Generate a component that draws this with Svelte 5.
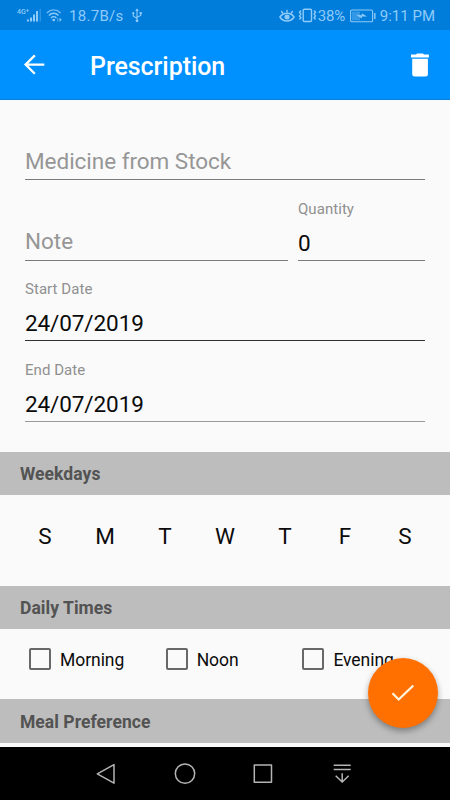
<script lang="ts">
  let medicine = $state('');
  let note = $state('');
  let quantity = $state(0);
  let startDate = $state('24/07/2019');
  let endDate = $state('24/07/2019');

  let weekdays = $state([
    { label: 'S', on: false },
    { label: 'M', on: false },
    { label: 'T', on: false },
    { label: 'W', on: false },
    { label: 'T', on: false },
    { label: 'F', on: false },
    { label: 'S', on: false }
  ]);

  let times = $state([
    { label: 'Morning', on: false },
    { label: 'Noon', on: false },
    { label: 'Evening', on: false }
  ]);
</script>

<div class="screen">
  <div class="status-bar">
    <div class="status-left">
      <span class="net">4G<b>+</b></span>
      <svg class="signal" width="16" height="15" viewBox="0 0 16 15" fill="currentColor"><rect x="0" y="11.5" width="2" height="2"/><rect x="3" y="9.5" width="2" height="4"/><rect x="6" y="6.5" width="2" height="7"/><rect x="9" y="3" width="2" height="10.5"/><rect x="12.6" y="1" width="1.3" height="12.5" opacity=".35"/></svg>
      <svg class="wifi" width="17" height="15" viewBox="0 0 17 15" fill="none" stroke="currentColor" stroke-width="1.4"><path d="M0.8 4.9C4.8 0.9 10.6 0.9 14.6 4.9" opacity=".8"/><path d="M2.9 7.4c2.8-2.8 6.8-2.8 9.6 0"/><path d="M5 9.9c1.5-1.5 3.9-1.5 5.4 0"/><circle cx="7.7" cy="12" r="1.3" fill="currentColor" stroke="none"/><path d="M11.7 10v3.5" stroke-width="1" opacity=".6"/><path d="M13.5 9.8l2.3 2-2.3 2z" fill="currentColor" stroke="none"/></svg>
      <span class="speed">18.7B/s</span>
      <svg width="10" height="15" viewBox="0 0 10 15" fill="none" stroke="currentColor" stroke-width="1.1"><path d="M5 2.5V12M1.3 5.5v2.7L5 10.2M8.7 5v2.5L5 9.3"/><path d="M5 .3L6.8 3H3.2z" fill="currentColor" stroke="none"/><circle cx="5" cy="12.8" r="1.4" fill="currentColor" stroke="none"/><circle cx="1.3" cy="5.2" r="1.1" fill="currentColor" stroke="none"/><path d="M7.6 4h2.2v2.2H7.6z" fill="currentColor" stroke="none"/></svg>
    </div>
    <div class="status-right">
      <svg width="16" height="14" viewBox="0 0 16 14" fill="none" stroke="currentColor" stroke-width="1.4"><path d="M.9 8C4.3 2.9 11.7 2.9 15.1 8C11.7 13.3 4.3 13.3 .9 8Z"/><circle cx="8" cy="8" r="1.9" fill="currentColor"/><path d="M8 3.5V.8M4 4.5L2.3 2M12 4.5L13.7 2"/></svg>
      <svg class="vibrate" width="19" height="15" viewBox="0 0 19 15" fill="none" stroke="currentColor" stroke-width="1.4"><rect x="5.2" y="1.2" width="8.3" height="12.3" rx="1"/><path d="M2.9 2.5L1.5 4.3l1.400 1.800-1.400 1.800 1.400 1.800-1.400 1.800M16.100 2.500l1.400 1.800-1.400 1.800 1.400 1.800-1.400 1.800 1.400 1.800"/></svg>
      <span class="percent">38%</span>
      <svg class="battery" width="26" height="14" viewBox="0 0 26 14" fill="none"><rect x=".6" y="1" width="22" height="11.8" rx="1.3" stroke="currentColor" stroke-width="1.1"/><rect x="2" y="2.5" width="8" height="8.8" fill="currentColor" opacity=".35"/><path d="M6 5.8l5.800.5V4.300l5.200 3.200-5.200-.1V9.500z" fill="currentColor"/><path d="M24.8 4v6" stroke="currentColor" stroke-width="1.4"/></svg>
      <span class="clock">9:11 PM</span>
    </div>
  </div>

  <header class="app-bar">
    <button class="icon-btn" aria-label="Back">
      <svg width="22" height="22" viewBox="0 0 22 22" fill="none" stroke="currentColor" stroke-width="2.3"><path d="M21.300 10.600H2.800M11.800 1.400L2.600 10.600l9.200 9.200"/></svg>
    </button>
    <h1>Prescription</h1>
    <button class="icon-btn" aria-label="Delete">
      <svg width="20" height="24" viewBox="0 0 20 24" fill="currentColor"><path d="M6 1.500L7 .6h6l1 .9h4.900V4.600H1V1.500zM2.200 5.800h15.700v15.300a2.500 2.500 0 0 1-2.500 2.500H4.700a2.500 2.500 0 0 1-2.500-2.500z"/></svg>
    </button>
  </header>

  <main>
    <div class="form">
      <div class="field">
        <div class="value" class:hint={!medicine}>{medicine || 'Medicine from Stock'}</div>
      </div>
      <div class="row">
        <div class="field note">
          <div class="value" class:hint={!note}>{note || 'Note'}</div>
        </div>
        <div class="field quantity">
          <span class="label">Quantity</span>
          <div class="value">{quantity}</div>
        </div>
      </div>
      <div class="field start">
        <span class="label">Start Date</span>
        <div class="value">{startDate}</div>
      </div>
      <div class="field end">
        <span class="label">End Date</span>
        <div class="value">{endDate}</div>
      </div>
    </div>

    <h2>Weekdays</h2>
    <div class="weekdays">
      {#each weekdays as day}
        <button class="day" class:on={day.on} onclick={() => day.on = !day.on}>{day.label}</button>
      {/each}
    </div>

    <h2>Daily Times</h2>
    <div class="times">
      {#each times as time}
        <button class="check" role="checkbox" aria-checked={time.on} onclick={() => time.on = !time.on}>
          <span class="box" class:on={time.on}></span>
          <span class="check-label">{time.label}</span>
        </button>
      {/each}
    </div>

    <h2 class="meal">Meal Preference</h2>
  </main>

  <button class="fab" aria-label="Save">
    <svg width="24" height="18" viewBox="0 0 24 18" fill="none" stroke="currentColor" stroke-width="2.3"><path d="M1.500 9.300l6.200 6.200L22.300 1.500"/></svg>
  </button>

  <nav>
    <svg width="22" height="24" viewBox="0 0 22 24" fill="none" stroke="currentColor" stroke-width="1.5" stroke-linejoin="round"><path d="M19 2.600v18.600L2.300 11.900z"/></svg>
    <svg width="22" height="24" viewBox="0 0 22 24" fill="none" stroke="currentColor" stroke-width="1.5"><circle cx="11" cy="11.600" r="9.700"/></svg>
    <svg width="22" height="24" viewBox="0 0 22 24" fill="none" stroke="currentColor" stroke-width="1.5" stroke-linejoin="round"><rect x="2.300" y="3" width="17.200" height="17.200"/></svg>
    <svg width="22" height="24" viewBox="0 0 22 24" fill="none" stroke="currentColor" stroke-width="1.5"><path d="M2.700 3.300h17M2.700 7.600h17M11.200 11.300v8.200M4.700 13.800l6.500 6.200 6.500-6.200"/></svg>
  </nav>
</div>

<style>
  :global(body) {
    background: #fafafa;
  }

  .screen {
    position: relative;
    width: 450px;
    height: 800px;
    display: flex;
    flex-direction: column;
    overflow: hidden;
    background: #fafafa;
    color: #0b0b0b;
    font-family: Roboto, sans-serif;
  }

  button {
    margin: 0;
    padding: 0;
    border: none;
    background: none;
    color: inherit;
    font-family: inherit;
    cursor: pointer;
  }

  svg {
    display: block;
    flex-shrink: 0;
  }

  .status-bar {
    height: 30px;
    flex-shrink: 0;
    display: flex;
    align-items: center;
    justify-content: space-between;
    padding: 1px 15px 0 17px;
    box-sizing: border-box;
    background: #007cdb;
    color: #8fcbf8;
    font-size: 15px;
    white-space: nowrap;
  }
  .status-left, .status-right {
    display: flex;
    align-items: center;
  }
  .net {
    width: 10px;
    display: flex;
    font-size: 7px;
    font-weight: 500;
    line-height: 8px;
    margin-top: -8px;
  }
  .net b {
    margin-top: -2px;
    font-size: 6px;
  }
  .wifi { margin-left: 3px; }
  .speed {
    width: 52px;
    margin: 0 11px 0 6px;
    letter-spacing: 0.3px;
  }
  .vibrate { margin-left: 3px; }
  .percent {
    width: 30px;
    margin-left: 1px;
    letter-spacing: -0.2px;
  }
  .battery { margin-left: 2px; }
  .clock { margin-left: 4px; }

  .app-bar {
    height: 70px;
    flex-shrink: 0;
    display: flex;
    align-items: center;
    padding: 0 20px 0 23px;
    box-sizing: border-box;
    background: #0091ff;
    color: #fff;
    box-shadow: inset 0 -1px 0 #0880dc;
  }
  h1 {
    flex: 1;
    margin: 3px 0 0 45px;
    font-size: 25px;
    font-weight: 500;
    line-height: 30px;
    letter-spacing: -0.06px;
  }

  main {
    height: 647px;
    flex-shrink: 0;
    overflow: hidden;
  }

  .form {
    height: 352px;
    padding: 46px 25px 0;
    box-sizing: border-box;
  }
  .field {
    display: flex;
    flex-direction: column;
    border-bottom: 1px solid #7b7b7b;
  }
  .value {
    height: 33px;
    font-size: 22.5px;
    line-height: 30px;
    letter-spacing: -0.03px;
  }
  .hint { color: #969696; }
  .label {
    height: 17px;
    margin-bottom: 11px;
    font-size: 15px;
    line-height: 17px;
    letter-spacing: 0.05px;
    color: #909090;
  }
  .row {
    display: flex;
    align-items: flex-end;
    gap: 10px;
    margin-top: 21px;
  }
  .note { width: 263px; }
  .note .value { height: 34px; }
  .quantity { flex: 1; }
  .quantity .value { height: 31px; line-height: 28px; }
  .start {
    margin-top: 20px;
    border-color: #303030;
  }
  .end {
    margin-top: 21px;
    border-color: #999;
  }
  .start .value, .end .value {
    height: 31px;
    line-height: 28px;
    letter-spacing: -0.1px;
  }

  h2 {
    height: 43px;
    margin: 0;
    padding: 1px 20px 0;
    box-sizing: border-box;
    background: #bdbdbd;
    color: #535353;
    font-size: 17.5px;
    font-weight: 700;
    line-height: 43px;
    letter-spacing: 0.05px;
  }
  .meal {
    height: 44px;
    padding-top: 2px;
  }

  .weekdays {
    height: 91px;
    display: flex;
    align-items: center;
    padding: 0 15px 9px;
    box-sizing: border-box;
  }
  .day {
    flex: 1;
    font-size: 22.5px;
    line-height: 30px;
  }
  .day.on { color: #ff7000; }

  .times {
    height: 70px;
    display: grid;
    grid-template-columns: repeat(3, 136.7px);
    padding: 18px 0 0 29px;
    box-sizing: border-box;
  }
  .check {
    height: 24px;
    display: flex;
    align-items: center;
  }
  .box {
    width: 22px;
    height: 22px;
    box-sizing: border-box;
    border: 2px solid #686868;
    border-radius: 2px;
  }
  .box.on { background: #ff7000; }
  .check-label {
    margin-left: 9px;
    font-size: 17.5px;
    line-height: 24px;
    padding-top: 2px;
    letter-spacing: -0.05px;
  }

  /* floats over the list */
  .fab {
    position: absolute;
    right: 12.5px;
    bottom: 72px;
    width: 70px;
    height: 70px;
    display: flex;
    align-items: center;
    justify-content: center;
    border-radius: 50%;
    background: #ff7000;
    color: #fff4dc;
    box-shadow: 0 3px 6px rgba(0, 0, 0, 0.35);
  }

  nav {
    height: 53px;
    flex-shrink: 0;
    display: flex;
    align-items: center;
    justify-content: center;
    gap: 56.5px;
    padding-right: 2px;
    box-sizing: border-box;
    background: #000;
    color: #b4b4b4;
  }
</style>
